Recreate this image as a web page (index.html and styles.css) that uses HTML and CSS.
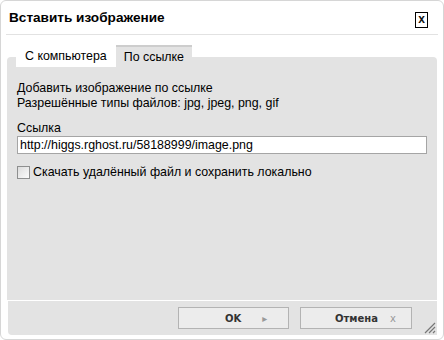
FILE: index.html
```html
<!DOCTYPE html>
<html lang="ru">
<head>
<meta charset="utf-8">
<title>Вставить изображение</title>
<link rel="stylesheet" href="styles.css">
</head>
<body>
<div class="dialog">
  <div class="header">
    <span class="title">Вставить изображение</span>
    <span class="close">x</span>
  </div>
  <div class="tabs">
    <div class="tab">С компьютера</div>
    <div class="tab active">По ссылке</div>
  </div>
  <div class="panel">
    <p class="info">Добавить изображение по ссылке<br>Разрешённые типы файлов: jpg, jpeg, png, gif</p>
    <div class="field-label">Ссылка</div>
    <div class="url">http://higgs.rghost.ru/58188999/image.png</div>
    <div class="check"><span class="box"></span><span>Скачать удалённый файл и сохранить локально</span></div>
  </div>
  <div class="footer">
    <div class="btn btn-ok"><span class="btn-text">OK</span><span class="btn-icon">&#9656;</span></div>
    <div class="btn btn-cancel"><span class="btn-text">Отмена</span><span class="btn-icon">x</span></div>
    <svg class="grip" width="12" height="12" viewBox="0 0 12 12">
      <path d="M11 1 L1 11 M11 5 L5 11 M11 9 L9 11" stroke="#777" stroke-width="1.2"/>
    </svg>
  </div>
</div>
</body>
</html>
```
FILE: styles.css
```css
html, body { margin: 0; padding: 0; background: #fff; }
body { font-family: "Liberation Sans", Arial, sans-serif; color: #000; }
.dialog {
  width: 444px; height: 340px; box-sizing: border-box;
  border: 1px solid #d6d6d6; border-radius: 6px;
  background: #fff;
  padding: 0 6px;
  display: flex; flex-direction: column;
}
.header {
  height: 33px; flex: none;
  margin: 0 -1px;
  border-bottom: 1px solid #e2e2e2;
  display: flex; align-items: flex-start; justify-content: space-between;
}
.title {
  font-weight: bold; font-size: 13.6px; line-height: 17px;
  padding: 8px 0 0 3px;
}
.close {
  margin: 11px 10px 0 0;
  width: 11px; height: 14px;
  border: 1px solid #000;
  font-weight: bold; font-size: 12px; line-height: 13px;
  text-align: center;
  color: #111;
}
.tabs {
  flex: none; display: flex; height: 22px;
  margin: 10px 0 0 9px;
  position: relative; z-index: 1;
}
.tab {
  font-size: 12.4px; line-height: 22px; padding: 0 9px;
  background: #fff; color: #000;
}
.tab.active {
  background: #e3e3e3;
  border-top: 2px solid #cdcdcd;
  line-height: 20px;
  padding: 0 8px;
}
.panel {
  flex: none; height: 243px; box-sizing: border-box;
  margin-top: -10px;
  background: #e3e3e3;
  border-radius: 4px 4px 0 0;
  padding: 24px 10px 0;
  font-size: 12.4px; line-height: 15px;
}
.info { margin: 0 0 10px; }
.field-label { line-height: 14px; }
.url {
  width: 410px; height: 18px; box-sizing: border-box;
  border: 1px solid #a5a5a5; background: #fff;
  padding: 0 2px; line-height: 16px;
  margin-top: 1px;
}
.check {
  display: flex; align-items: center; gap: 3px;
  margin-top: 11px; line-height: 14px;
}
.box {
  width: 11px; height: 11px; border: 1px solid #8e8f8f;
  background: linear-gradient(135deg, #dcdcdc, #fbfbfb);
}
.footer {
  flex: none; height: 34px; box-sizing: border-box;
  margin: 1px 0 4px 1px;
  background: #e3e3e3;
  border-radius: 0 0 0 4px;
  padding: 6px 0 0;
  display: flex; justify-content: flex-end; align-items: flex-start; gap: 11px;
}
.btn {
  width: 112px; height: 22px; box-sizing: border-box;
  border: 1px solid #b3b3b3; background: #ececec;
  display: flex; align-items: center;
  font-family: "DejaVu Sans", Verdana, sans-serif; font-weight: bold; font-size: 10px;
  color: #333;
}
.btn-ok { width: 111px; padding-left: 46px; }
.btn-ok .btn-icon { margin-left: 21px; }
.btn-cancel { padding-left: 34px; }
.btn-cancel .btn-icon { margin-left: 12px; }
.btn-icon { color: #999; font-weight: normal; font-size: 10px; }
.grip { align-self: flex-end; margin: 0 1px 1px 1px; }
```
